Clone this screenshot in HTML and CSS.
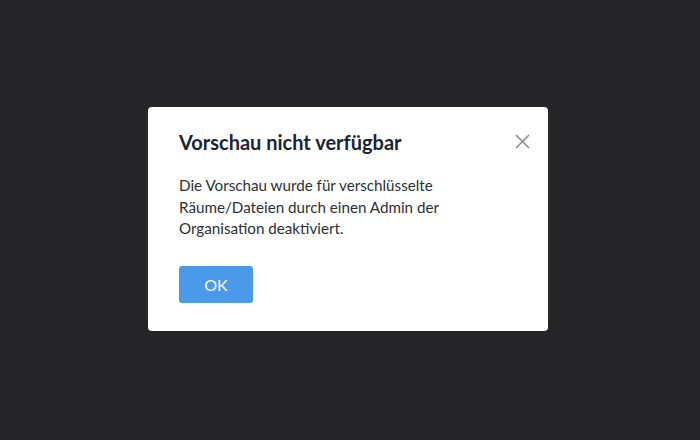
FILE: index.html
```html
<!DOCTYPE html>
<html lang="de">
<head>
    <meta charset="UTF-8" />
    <title>Vorschau nicht verfügbar</title>
    <link rel="stylesheet" href="styles.css">
</head>
<body>
    <div class="overlay">
        <div class="dialog">
            <div class="dialog-header">
                <h2>Vorschau nicht verfügbar</h2>
                <span class="close-btn" aria-label="Schließen">
                    <svg width="15" height="15" viewBox="0 0 15 15">
                        <path d="M1 1 L14 14 M14 1 L1 14" stroke="#8a8c8f" stroke-width="1.6" fill="none"/>
                    </svg>
                </span>
            </div>
            <p class="dialog-text">Die Vorschau wurde für verschlüsselte Räume/Dateien durch einen Admin der Organisation deaktiviert.</p>
            <button class="ok-btn">OK</button>
        </div>
    </div>
</body>
</html>
```

FILE: styles.css
```css
html, body {
    margin: 0;
    height: 100%;
}

body {
    font-family: Lato, 'Noto Sans', sans-serif;
    background-color: #262628;
}

.overlay {
    height: 100%;
    display: flex;
    align-items: center;
    justify-content: center;
}

.dialog {
    width: 400px;
    box-sizing: border-box;
    padding: 22px 18px 28px 31px;
    background-color: #fff;
    border-radius: 4px;
    margin: -2px 0 0 -4px;
}

.dialog-header {
    display: flex;
    justify-content: space-between;
    align-items: flex-start;
}

.dialog-header h2 {
    margin: 0;
    font-size: 20px;
    line-height: 26px;
    font-weight: bold;
    color: #1b2431;
}

.close-btn {
    display: flex;
    margin-top: 5px;
    cursor: pointer;
}

.dialog-text {
    margin: 20px 0 0 0;
    width: 300px;
    font-size: 15.2px;
    line-height: 21.5px;
    color: #2b3036;
}

.ok-btn {
    margin-top: 26px;
    width: 74px;
    height: 37px;
    border: none;
    border-radius: 3px;
    background-color: #4a9ae9;
    color: #fff;
    font-family: inherit;
    font-size: 16px;
    cursor: pointer;
}
```
